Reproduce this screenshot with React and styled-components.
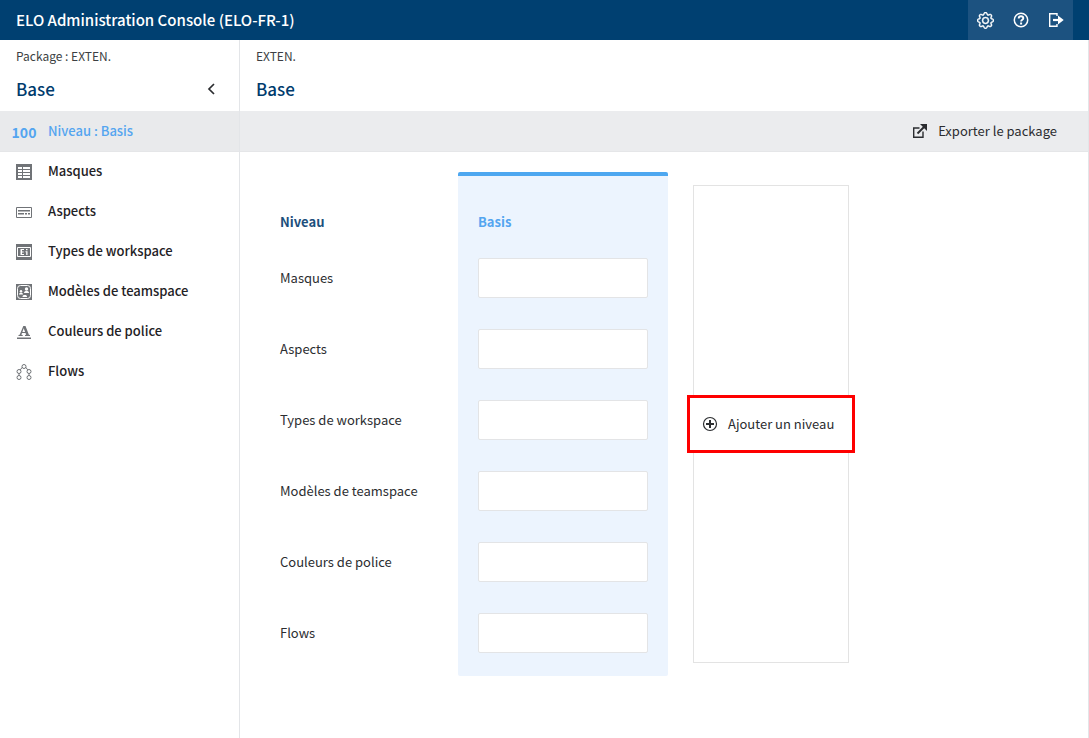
import React from "react";
import styled, { createGlobalStyle } from "styled-components";
import { BsGear } from "react-icons/bs";

const GlobalStyle = createGlobalStyle`
  *, *::before, *::after {
    box-sizing: border-box;
  }

  body {
    margin: 0;
    background: #fff;
    color: #2b2d30;
    font-family: "Noto Sans CJK SC", "Noto Sans", sans-serif;
    font-size: 13px;
    line-height: 20px;
  }

  button, input {
    font: inherit;
    color: inherit;
  }
`;

/* ========== icons ========== */

const HelpIcon = () => (
  <svg width="16" height="16" viewBox="0 0 16 16" fill="none" stroke="currentColor" strokeWidth="1.5">
    <circle cx="8" cy="8" r="6.7" />
    <path d="M5.7 6.4c0-1.300 1-2.100 2.300-2.100s2.300.8 2.300 2c0 1.500-2.200 1.500-2.200 3.200" strokeWidth="1.9" />
    <path d="M7.100 10.500h2v1.900h-2z" fill="currentColor" stroke="none" />
  </svg>
);

const LogoutIcon = () => (
  <svg width="16" height="16" viewBox="0 0 16 16" fill="none" stroke="currentColor">
    <path d="M9 4V1.700H1.700v12.600H9V12" strokeWidth="1.4" />
    <path d="M5 8h8" strokeWidth="2.2" />
    <path d="M10 3.500 15.700 8 10 12.500z" fill="currentColor" stroke="none" />
  </svg>
);

const ChevronIcon = () => (
  <svg width="16" height="16" viewBox="0 0 16 16" fill="none" stroke="currentColor" strokeWidth="1.7">
    <path d="M11 3 6 8l5 5" />
  </svg>
);

const ExportIcon = () => (
  <svg width="16" height="16" viewBox="0 0 16 16" fill="none" stroke="currentColor">
    <path d="M7.500 5H1.700v9.300H11V8.500" strokeWidth="1.4" />
    <path d="M5.500 10.500 13 3" strokeWidth="2" />
    <path d="M8 1h7v7z" fill="currentColor" stroke="none" />
  </svg>
);

const PlusIcon = () => (
  <svg width="16" height="16" viewBox="0 0 16 16" fill="none" stroke="currentColor">
    <circle cx="8" cy="8" r="6.500" strokeWidth="1.200" />
    <path d="M8 4v8M4 8h8" strokeWidth="2" />
  </svg>
);

const MaskIcon = () => (
  <svg width="16" height="16" viewBox="0 0 16 16">
    <path d="M0 0h16v16H0z" fill="currentColor" />
    <path d="M2 3h4v2H2zM7 3h7v2H7zM2 6h4v2H2zM7 6h7v2H7zM2 9h4v2H2zM7 9h7v2H7zM2 12h4v2H2zM7 12h7v2H7z" fill="#fff" />
  </svg>
);

const AspectIcon = () => (
  <svg width="16" height="16" viewBox="0 0 16 16">
    <path d="M.5 3.500h15v10H.5z" fill="none" stroke="currentColor" />
    <path d="M2 6h12v1.500H2zM2 9h6v1.500H2zM9 9h2v1.500H9zM12 9h2v1.500h-2z" fill="currentColor" />
  </svg>
);

const WorkspaceIcon = () => (
  <svg width="16" height="16" viewBox="0 0 16 16">
    <path d="M0 0h16v16H0z" fill="currentColor" />
    <path d="M1.500 3.500h13v9h-13z" fill="none" stroke="#fff" />
    <path d="M4.500 5H8v1H6v1.500h1.700v1H6V10h2v1H4.500zM9.500 7.300h2V11h-1.300V8.300h-.7zM10 5h1.500v1.300H10z" fill="#fff" />
  </svg>
);

const TeamspaceIcon = () => (
  <svg width="16" height="16" viewBox="0 0 16 16">
    <path d="M0 0h16v16H0z" fill="currentColor" />
    <rect x="1.500" y="1.500" width="13" height="13" rx="3" fill="none" stroke="#fff" />
    <circle cx="10.500" cy="5" r="1.700" fill="#fff" />
    <path d="M8 9c0-1.500 1-2 2.500-2S13 7.500 13 9z" fill="#fff" />
    <circle cx="5" cy="7.300" r="1.200" fill="#fff" />
    <path d="M3 10.500c0-1.300.8-1.800 2-1.800s2 .5 2 1.800z" fill="#fff" />
    <path d="M6.500 13c0-1.500.8-2 2.300-2s2.200.5 2.200 2z" fill="#fff" />
  </svg>
);

const FontColorIcon = () => (
  <svg width="16" height="16" viewBox="0 0 16 16" fill="currentColor">
    <path d="M1 13.500h14V15H1z" />
    <path d="M7.300 2h2.200l3.400 8.800 1.100.3v.9H9v-.9l1.200-.3-.7-1.800H6l-.6 1.800 1.300.3v.9H2.500v-.9l1.200-.3zM7.700 4.300 6.400 8h2.700z" fillRule="evenodd" />
  </svg>
);

const FlowIcon = () => (
  <svg width="16" height="16" viewBox="0 0 16 16" fill="none" stroke="currentColor">
    <circle cx="8" cy="2.500" r="2" />
    <circle cx="3" cy="7.500" r="2" />
    <circle cx="13" cy="7.500" r="2" />
    <circle cx="3" cy="13.500" r="2" />
    <circle cx="13" cy="13.500" r="2" />
    <path d="M6.200 3.300 4.300 5.900M9.800 3.300l1.900 2.600M3 9.500v2M13 9.500v2" />
  </svg>
);

/* ========== data ========== */

const categories = [
  { id: "masks", label: "Masques", Icon: MaskIcon },
  { id: "aspects", label: "Aspects", Icon: AspectIcon },
  { id: "workspaces", label: "Types de workspace", Icon: WorkspaceIcon },
  { id: "teamspaces", label: "Modèles de teamspace", Icon: TeamspaceIcon },
  { id: "fontColors", label: "Couleurs de police", Icon: FontColorIcon },
  { id: "flows", label: "Flows", Icon: FlowIcon },
];

export default function App() {
  return (
    <Page>
      <GlobalStyle />
      <TopBar>
        <AppTitle>ELO Administration Console (ELO-FR-1)</AppTitle>
        <TopActions>
          <IconButton type="button" aria-label="Configuration"><BsGear size={17} strokeWidth="0.4" /></IconButton>
          <IconButton type="button" aria-label="Aide"><HelpIcon /></IconButton>
          <IconButton type="button" aria-label="Déconnexion"><LogoutIcon /></IconButton>
        </TopActions>
      </TopBar>

      <Body>
        <Sidebar>
          <Heading>
            <Crumb>Package : EXTEN.</Crumb>
            <HeadingRow>
              <Title>Base</Title>
              <CollapseButton type="button" aria-label="Réduire"><ChevronIcon /></CollapseButton>
            </HeadingRow>
          </Heading>
          <nav>
            <NavLink href="#level" $active>
              <NavIcon><LevelNumber>100</LevelNumber></NavIcon>
              Niveau : Basis
            </NavLink>
            {categories.map(({ id, label, Icon }) => (
              <NavLink key={id} href={`#${id}`}>
                <NavIcon><Icon /></NavIcon>
                {label}
              </NavLink>
            ))}
          </nav>
        </Sidebar>

        <Main>
          <Heading>
            <Crumb>EXTEN.</Crumb>
            <HeadingRow>
              <Title>Base</Title>
            </HeadingRow>
          </Heading>
          <Toolbar>
            <ToolButton type="button"><ExportIcon />Exporter le package</ToolButton>
          </Toolbar>

          <Levels>
            <LabelColumn>
              <ColumnHead>Niveau</ColumnHead>
              {categories.map(({ id, label }) => (
                <Cell key={id}><label htmlFor={`basis-${id}`}>{label}</label></Cell>
              ))}
            </LabelColumn>
            <LevelColumn>
              <ColumnHead $accent>Basis</ColumnHead>
              {categories.map(({ id }) => (
                <Cell key={id}><Field id={`basis-${id}`} type="text" /></Cell>
              ))}
            </LevelColumn>
            <AddColumn>
              <Highlight>
                <ToolButton type="button"><PlusIcon />Ajouter un niveau</ToolButton>
              </Highlight>
            </AddColumn>
          </Levels>
        </Main>
      </Body>
    </Page>
  );
}

/* ========== styles ========== */

const Page = styled.div`
  display: flex;
  flex-direction: column;
  min-height: 100vh;
`;

const TopBar = styled.header`
  display: flex;
  align-items: center;
  justify-content: space-between;
  height: 40px;
  padding: 0 16px;
  background: #004071;
  color: #fff;
`;

const AppTitle = styled.div`
  font-size: 15px;
  font-weight: 500;
`;

const TopActions = styled.div`
  display: flex;
  align-self: stretch;
  background: #1c5280;
`;

const IconButton = styled.button`
  display: flex;
  align-items: center;
  justify-content: center;
  width: 35px;
  padding: 0;
  border: none;
  background: none;
  cursor: pointer;
`;

const Body = styled.div`
  display: flex;
  flex: 1;
`;

const Sidebar = styled.aside`
  flex: 0 0 240px;
  border-right: 1px solid #e3e5e8;
`;

const Main = styled.main`
  flex: 1;
  min-width: 0;
  border-right: 1px solid #e3e5e8;
`;

const Heading = styled.div`
  height: 71px;
  padding: 6px 16px 0;
`;

const Crumb = styled.div`
  color: #3c3f43;
  font-size: 12px;
`;

const HeadingRow = styled.div`
  display: flex;
  align-items: center;
  justify-content: space-between;
  margin-top: 11px;
`;

const Title = styled.h1`
  margin: 0;
  color: #003b6d;
  font-size: 17px;
  font-weight: 500;
  line-height: 24px;
`;

const CollapseButton = styled.button`
  display: flex;
  padding: 4px;
  border: none;
  background: none;
  cursor: pointer;
`;

const NavLink = styled.a`
  display: flex;
  align-items: center;
  height: 40px;
  background: ${(p) => (p.$active ? "#e9eaec" : "transparent")};
  box-shadow: ${(p) => (p.$active ? "0 1px #e5e6e8" : "none")};
  color: ${(p) => (p.$active ? "#54a5f0" : "#1f2225")};
  font-weight: 500;
  text-decoration: none;
`;

const NavIcon = styled.span`
  display: flex;
  justify-content: center;
  flex: 0 0 48px;
  padding-top: 1px;
  color: #707377;
`;

const LevelNumber = styled.span`
  color: #54a5f0;
  font-size: 14px;
  font-weight: 700;
`;

const Toolbar = styled.div`
  display: flex;
  align-items: center;
  justify-content: flex-end;
  height: 41px;
  padding: 0 31px;
  background: #ebecee;
  border-bottom: 1px solid #e5e6e8;
`;

const ToolButton = styled.button`
  display: flex;
  align-items: center;
  gap: 10px;
  padding: 0;
  border: none;
  background: none;
  white-space: nowrap;
  cursor: pointer;
`;

const Levels = styled.section`
  display: flex;
  align-items: flex-start;
  padding: 20px 40px;
`;

const LabelColumn = styled.div`
  flex: 0 0 178px;
  padding-top: 29px;
`;

const LevelColumn = styled.div`
  flex: 0 0 210px;
  padding: 25px 20px 7px;
  border-top: 4px solid #4da7f0;
  border-radius: 2px;
  background: #ecf4fe;
`;

const ColumnHead = styled.div`
  display: flex;
  align-items: center;
  height: 42px;
  color: ${(p) => (p.$accent ? "#54a5f0" : "#1d4f7c")};
  font-weight: 700;
`;

const Cell = styled.div`
  display: flex;
  align-items: center;
  height: 71px;
  padding-bottom: 1px;
`;

const Field = styled.input`
  width: 100%;
  height: 40px;
  padding: 0 10px;
  border: 1px solid #e3e4e6;
  border-radius: 2px;
  background: #fff;
  outline: none;

  &:focus {
    border-color: #4da7f0;
  }
`;

const AddColumn = styled.div`
  display: flex;
  align-items: center;
  flex: 0 0 156px;
  align-self: stretch;
  margin: 13px 0 13px 25px;
  border: 1px solid #e3e3e3;
`;

const Highlight = styled.div`
  display: flex;
  align-items: center;
  flex: 1;
  height: 58px;
  margin: 0 -7px;
  padding: 0 12px;
  border: 3px solid #fe0000;
  background: #fff;
`;
